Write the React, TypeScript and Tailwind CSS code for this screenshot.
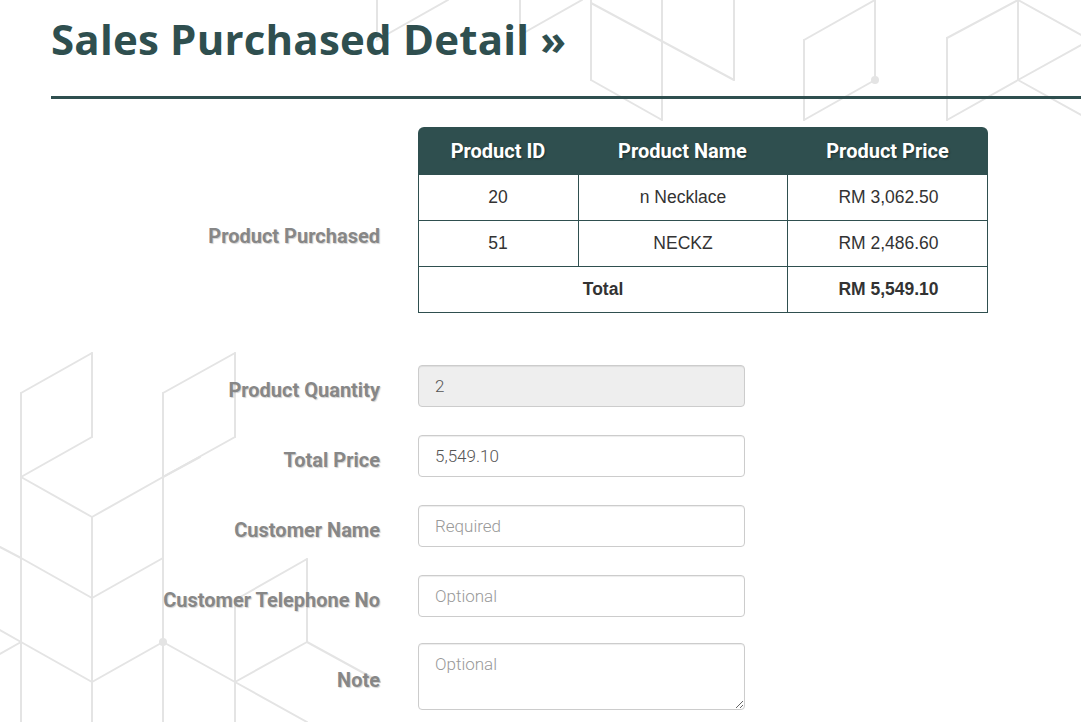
const bgLines: [number, number, number, number][] = [
  // top band
  [377, 0, 377, 40],
  [377, 40, 448, 0],
  [520, 0, 520, 35],
  [520, 35, 582, 0],
  [591, 0, 591, 80],
  [591, 80, 662, 120],
  [662, 0, 662, 120],
  [591, 3, 734, 80],
  [734, 0, 734, 80],
  [804, 40, 804, 120],
  [804, 40, 875, 0],
  [875, 0, 875, 80],
  [875, 80, 804, 120],
  [947, 38, 947, 120],
  [947, 38, 1018, 0],
  [1018, 0, 1018, 80],
  [1018, 80, 947, 120],
  [1018, 0, 1081, 35],
  [1018, 80, 1081, 115],
  [1018, 80, 1081, 45],
  // bottom left
  [21, 393, 92, 353],
  [92, 353, 92, 437],
  [92, 437, 21, 477],
  [21, 393, 21, 722],
  [21, 477, 92, 517],
  [92, 517, 163, 477],
  [163, 477, 200, 457],
  [92, 517, 92, 722],
  [163, 393, 235, 353],
  [235, 353, 235, 437],
  [235, 437, 163, 477],
  [163, 393, 163, 722],
  [0, 547, 21, 558],
  [21, 558, 92, 598],
  [92, 598, 163, 558],
  [0, 630, 21, 642],
  [21, 642, 0, 654],
  [21, 642, 92, 682],
  [92, 682, 163, 642],
  [163, 642, 235, 682],
  [235, 682, 307, 722],
  [235, 600, 307, 559],
  [307, 559, 307, 642],
  [307, 642, 235, 682],
  [307, 642, 380, 682],
  [235, 600, 235, 722],
];

const items = [
  { id: "20", name: "n Necklace", price: "RM 3,062.50" },
  { id: "51", name: "NECKZ", price: "RM 2,486.60" },
];

const labelCls =
  "text-right font-['Roboto',sans-serif] text-[20px] font-bold leading-6 text-[#878787] [text-shadow:1px_1px_1px_rgba(0,0,0,0.18)]";

const inputCls =
  "h-[42px] w-[327px] rounded-[4px] border border-[#cccccc] px-4 font-['Roboto',sans-serif] text-[17px] font-light text-[#555555] shadow-[inset_0_1px_1px_rgba(0,0,0,0.075)] outline-none placeholder:text-[#999999]";

function FormRow({ label, children, pad = "pt-[13px]" }: { label: string; children: React.ReactNode; pad?: string }) {
  return (
    <div className="grid grid-cols-[329px_570px] gap-x-[38px]">
      <div className={`${labelCls} ${pad}`}>{label}</div>
      <div>{children}</div>
    </div>
  );
}

export default function App() {
  return (
    <div className="relative min-h-[722px] w-full overflow-hidden bg-white">
      <svg className="pointer-events-none absolute left-0 top-0" width="1081" height="722" viewBox="0 0 1081 722">
        <g stroke="#e4e4e4" strokeWidth="2" fill="none" strokeLinecap="round">
          {bgLines.map(([x1, y1, x2, y2], i) => (
            <line key={i} x1={x1} y1={y1} x2={x2} y2={y2} />
          ))}
        </g>
        <circle cx="875" cy="80" r="4" fill="#e4e4e4" />
        <circle cx="163" cy="642" r="4" fill="#e4e4e4" />
      </svg>

      <div className="relative pl-[51px] pt-[14px]">
        <h1 className="font-['Open_Sans',sans-serif] text-[42px] font-bold leading-[50px] tracking-[0.2px] text-[#2f4f4f]">
          Sales Purchased Detail »
        </h1>
        <div className="mt-[32px] h-[3px] bg-[#2f4f4f]" />

        {/* products table */}
        <div className="mt-[28px] grid grid-cols-[329px_570px] gap-x-[38px]">
          <div className={`${labelCls} pt-[97px]`}>Product Purchased</div>
          <div className="text-center font-['Liberation_Sans',Arial,sans-serif] text-[17.5px] text-[#333333]">
            <div className="grid h-[48px] grid-cols-[160px_209px_201px] items-center rounded-t-[6px] bg-[#2f4f4f] font-['Roboto',sans-serif] text-[20px] font-bold text-white [text-shadow:1px_1px_2px_rgba(0,0,0,0.4)]">
              <div>Product ID</div>
              <div>Product Name</div>
              <div>Product Price</div>
            </div>
            {items.map((it) => (
              <div
                key={it.id}
                className="grid h-[46px] grid-cols-[160px_209px_201px] border-x border-b border-[#2f4f4f] bg-white"
              >
                <div className="flex items-center justify-center border-r border-[#2f4f4f] pr-px">{it.id}</div>
                <div className="flex items-center justify-center border-r border-[#2f4f4f]">{it.name}</div>
                <div className="flex items-center justify-center">{it.price}</div>
              </div>
            ))}
            <div className="grid h-[46px] grid-cols-[369px_201px] border-x border-b border-[#2f4f4f] bg-white font-bold">
              <div className="flex items-center justify-center border-r border-[#2f4f4f]">Total</div>
              <div className="flex items-center justify-center">RM 5,549.10</div>
            </div>
          </div>
        </div>

        <div className="mt-[52px] flex flex-col">
          <FormRow label="Product Quantity">
            <input className={`${inputCls} bg-[#eeeeee]`} value="2" disabled readOnly />
          </FormRow>
          <div className="mt-[28px]">
            <FormRow label="Total Price">
              <input className={`${inputCls} bg-white`} defaultValue="5,549.10" />
            </FormRow>
          </div>
          <div className="mt-[28px]">
            <FormRow label="Customer Name">
              <input className={`${inputCls} bg-white`} placeholder="Required" />
            </FormRow>
          </div>
          <div className="mt-[28px]">
            <FormRow label="Customer Telephone No">
              <input className={`${inputCls} bg-white`} placeholder="Optional" />
            </FormRow>
          </div>
          <div className="mt-[26px]">
            <FormRow label="Note" pad="pt-[25px]">
              <textarea
                className="block h-[67px] w-[327px] rounded-[4px] border border-[#cccccc] bg-white px-4 py-[9px] font-['Roboto',sans-serif] text-[17px] font-light leading-[22px] text-[#555555] shadow-[inset_0_1px_1px_rgba(0,0,0,0.075)] outline-none placeholder:text-[#999999]"
                placeholder="Optional"
              />
            </FormRow>
          </div>
        </div>
      </div>
    </div>
  );
}
